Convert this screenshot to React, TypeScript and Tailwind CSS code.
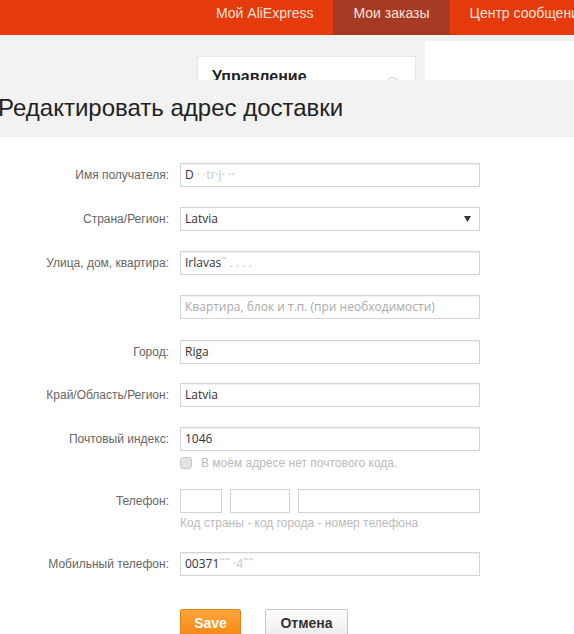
import React from "react";

const labelFont = { fontFamily: '"Liberation Sans", Arial, sans-serif' };
const fieldFont = { fontFamily: '"Open Sans", "Liberation Sans", sans-serif' };

function Field({ children, placeholder }: { children?: React.ReactNode; placeholder?: string }) {
  return (
    <div
      className="h-[24px] w-[300px] border border-[#d3d3d3] bg-white px-[4px] text-[12px] leading-[22px] text-[#333] shadow-[inset_0_1px_1px_rgba(0,0,0,0.06)]"
      style={fieldFont}
    >
      {children ?? <span className="text-[#aaa]">{placeholder}</span>}
    </div>
  );
}

function Row({ label, children, className = "" }: { label?: string; children: React.ReactNode; className?: string }) {
  return (
    <div className={`flex items-start ${className}`}>
      <div className="w-[170px] pr-[1px] text-right text-[12px] leading-[24px] text-[#666]" style={labelFont}>
        {label}
      </div>
      <div className="ml-[10px]">{children}</div>
    </div>
  );
}

export default function App() {
  return (
    <div className="h-[634px] w-[574px] overflow-hidden bg-white" style={labelFont}>
      {/* top nav */}
      <div className="flex h-[35px] bg-[#e43a0c] pl-[196px] text-[14px] text-[#fde3d6]">
        <div className="px-[20px] pt-[3px] leading-[20px] whitespace-nowrap">Мой AliExpress</div>
        <div className="bg-[#a63a25] px-[20px] pt-[3px] leading-[20px] whitespace-nowrap">Мои заказы</div>
        <div className="px-[20px] pt-[3px] leading-[20px] whitespace-nowrap">Центр сообщений</div>
      </div>

      {/* page behind the dialog */}
      <div className="flex h-[45px] overflow-hidden bg-[#f2f2f2]">
        <div className="relative ml-[197px] mt-[21px] h-[60px] w-[219px] border border-[#e6e6e6] bg-white pl-[14px] pt-[10px]">
          <div className="text-[16px] font-bold leading-[20px] text-[#222]">Управление</div>
          <div className="absolute right-[17px] top-[20px] h-[11px] w-[11px] rounded-full border border-[#ccc]" />
        </div>
        <div className="ml-[9px] mt-[6px] h-[60px] flex-1 bg-white" />
      </div>

      {/* dialog */}
      <div className="h-[57px] bg-[#f2f2f2] pt-[14px]">
        <div className="ml-[-2px] whitespace-nowrap text-[24px] leading-[28px] text-[#222]">Редактировать адрес доставки</div>
      </div>

      <div className="bg-white pt-[26px]">
        <Row label="Имя получателя:">
          <Field>
            D<span className="text-[#c8c8c8]"> · ·tr·j· ··</span>
          </Field>
        </Row>
        <Row label="Страна/Регион:" className="mt-[20px]">
          <div
            className="flex h-[24px] w-[300px] items-center justify-between border border-[#d3d3d3] bg-white pl-[4px] pr-[8px] text-[12px] text-[#333]"
            style={fieldFont}
          >
            <span>Latvia</span>
            <svg width="7" height="6" viewBox="0 0 7 6">
              <path d="M0 0h7L3.5 6z" fill="#333" />
            </svg>
          </div>
        </Row>
        <Row label="Улица, дом, квартира:" className="mt-[20px]">
          <Field>
            Irlavas<span className="text-[#c8c8c8]">˜ . . . .</span>
          </Field>
        </Row>
        <Row className="mt-[20px]">
          <Field placeholder="Квартира, блок и т.п. (при необходимости)" />
        </Row>
        <Row label="Город:" className="mt-[21px]">
          <Field>Riga</Field>
        </Row>
        <Row label="Край/Область/Регион:" className="mt-[19px]">
          <Field>Latvia</Field>
        </Row>
        <Row label="Почтовый индекс:" className="mt-[20px]">
          <Field>1046</Field>
          <div className="mt-[4px] flex items-center">
            <div className="h-[12px] w-[12px] rounded-[3px] border border-[#c9c9c9] bg-[#e4e4e4]" />
            <span className="ml-[9px] text-[12px] leading-[16px] text-[#bbb]">В моём адресе нет почтового кода.</span>
          </div>
        </Row>
        <Row label="Телефон:" className="mt-[18px]">
          <div className="flex gap-[8px]">
            <div className="h-[24px] w-[42px] border border-[#d3d3d3] bg-white" />
            <div className="h-[24px] w-[60px] border border-[#d3d3d3] bg-white" />
            <div className="h-[24px] w-[182px] border border-[#d3d3d3] bg-white" />
          </div>
          <div className="mt-[2px] text-[12px] leading-[16px] text-[#bbb]">Код страны - код города - номер телефона</div>
        </Row>
        <Row label="Мобильный телефон:" className="mt-[21px]">
          <Field>
            00371<span className="text-[#c8c8c8]">˜˜ ·4˜˜</span>
          </Field>
        </Row>
        <div className="ml-[180px] mt-[33px] flex gap-[24px]">
          <button className="h-[28px] w-[61px] rounded-[2px] border border-[#e9801a] bg-gradient-to-b from-[#ffa53a] to-[#f7870f] text-[14px] font-bold text-white">
            Save
          </button>
          <button className="h-[28px] w-[83px] rounded-[2px] border border-[#c6c6c6] bg-gradient-to-b from-[#ffffff] to-[#ececec] text-[14px] font-bold text-[#333]">
            Отмена
          </button>
        </div>
      </div>
    </div>
  );
}
